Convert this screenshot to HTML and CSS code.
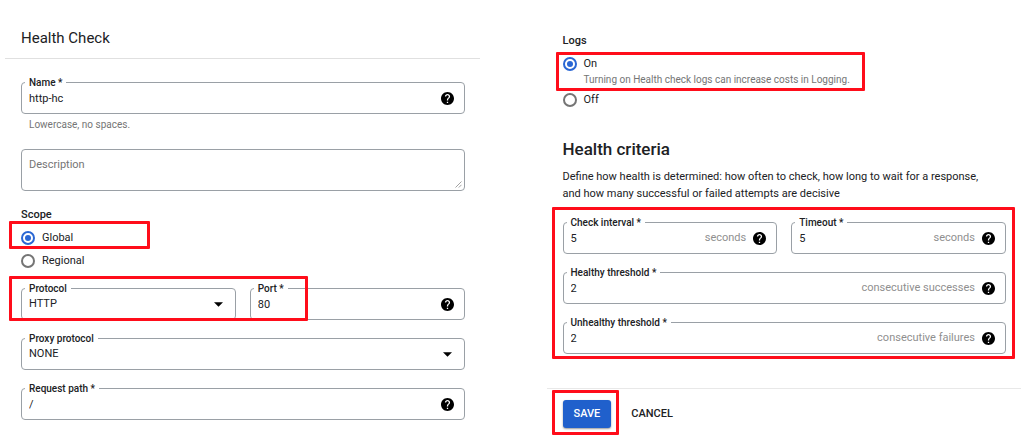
FILE: index.html
```html
<!DOCTYPE html>
<html lang="en">
<head>
<meta charset="utf-8">
<meta name="viewport" content="width=device-width, initial-scale=1">
<title>Health Check</title>
<link rel="stylesheet" href="styles.css">
</head>
<body>
<svg class="sprite" aria-hidden="true">
  <symbol id="help" viewBox="2 2 20 20"><path d="M12 2C6.48 2 2 6.48 2 12s4.48 10 10 10 10-4.48 10-10S17.52 2 12 2zm1 17h-2v-2h2v2zm2.07-7.75l-.9.92C13.45 12.9 13 13.5 13 15h-2v-.5c0-1.1.45-2.1 1.17-2.83l1.24-1.26c.37-.36.59-.86.59-1.41 0-1.1-.9-2-2-2s-2 .9-2 2H8c0-2.21 1.79-4 4-4s4 1.79 4 4c0 .88-.36 1.68-.93 2.25z"/></symbol>
  <symbol id="caret" viewBox="0 0 10 5"><path d="M0 0h10L5 5z"/></symbol>
</svg>
<form class="page">
  <section class="panel">
    <h1 class="panel-title">Health Check</h1>
    <div class="content content-basic">
      <div>
        <div class="field">
          <label class="field-label" for="name">Name *</label>
          <input class="field-input" id="name" type="text" value="http-hc">
          <button class="help" type="button" aria-label="Help for name"><svg><use href="#help"/></svg></button>
        </div>
        <p class="hint field-hint">Lowercase, no spaces.</p>
      </div>
      <div class="field field-area">
        <textarea class="area" aria-label="Description" placeholder="Description"></textarea>
        <svg class="grip" viewBox="0 0 7 7" aria-hidden="true"><path d="M0.5 6.5l6-6M3.8 6.5l2.7-2.7"/></svg>
      </div>
      <fieldset class="choices">
        <legend class="group-title">Scope</legend>
        <div class="option mark mark-scope">
          <input class="radio" type="radio" name="scope" id="global" checked>
          <label for="global">Global</label>
        </div>
        <div class="option">
          <input class="radio" type="radio" name="scope" id="regional">
          <label for="regional">Regional</label>
        </div>
      </fieldset>
      <div class="fields">
        <div class="pair mark mark-protocol">
          <div class="field">
            <label class="field-label" for="protocol">Protocol</label>
            <select class="field-input" id="protocol"><option>HTTP</option></select>
            <svg class="caret" aria-hidden="true"><use href="#caret"/></svg>
          </div>
          <div class="field">
            <label class="field-label" for="port">Port *</label>
            <input class="field-input" id="port" type="text" value="80">
            <button class="help" type="button" aria-label="Help for port"><svg><use href="#help"/></svg></button>
          </div>
        </div>
        <div class="field">
          <label class="field-label" for="proxy">Proxy protocol</label>
          <select class="field-input" id="proxy"><option>NONE</option></select>
          <svg class="caret" aria-hidden="true"><use href="#caret"/></svg>
        </div>
        <div class="field">
          <label class="field-label" for="path">Request path *</label>
          <input class="field-input" id="path" type="text" value="/">
          <button class="help" type="button" aria-label="Help for request path"><svg><use href="#help"/></svg></button>
        </div>
      </div>
    </div>
  </section>

  <section class="panel">
    <div class="content content-criteria">
      <fieldset class="choices">
        <legend class="group-title">Logs</legend>
        <div class="option option-described mark mark-logs">
          <input class="radio" type="radio" name="logs" id="on" aria-describedby="on-hint" checked>
          <div>
            <label for="on">On</label>
            <p class="hint" id="on-hint">Turning on Health check logs can increase costs in Logging.</p>
          </div>
        </div>
        <div class="option">
          <input class="radio" type="radio" name="logs" id="off">
          <label for="off">Off</label>
        </div>
      </fieldset>
      <h2 class="section-title">Health criteria</h2>
      <p class="description">Define how health is determined: how often to check, how long to wait for a response, and how many successful or failed attempts are decisive</p>
      <div class="fields mark mark-criteria">
        <div class="pair">
          <div class="field">
            <label class="field-label" for="interval">Check interval *</label>
            <input class="field-input" id="interval" type="text" value="5">
            <span class="suffix">seconds</span>
            <button class="help" type="button" aria-label="Help for check interval"><svg><use href="#help"/></svg></button>
          </div>
          <div class="field">
            <label class="field-label" for="timeout">Timeout *</label>
            <input class="field-input" id="timeout" type="text" value="5">
            <span class="suffix">seconds</span>
            <button class="help" type="button" aria-label="Help for timeout"><svg><use href="#help"/></svg></button>
          </div>
        </div>
        <div class="field">
          <label class="field-label" for="healthy">Healthy threshold *</label>
          <input class="field-input" id="healthy" type="text" value="2">
          <span class="suffix">consecutive successes</span>
          <button class="help" type="button" aria-label="Help for healthy threshold"><svg><use href="#help"/></svg></button>
        </div>
        <div class="field">
          <label class="field-label" for="unhealthy">Unhealthy threshold *</label>
          <input class="field-input" id="unhealthy" type="text" value="2">
          <span class="suffix">consecutive failures</span>
          <button class="help" type="button" aria-label="Help for unhealthy threshold"><svg><use href="#help"/></svg></button>
        </div>
      </div>
    </div>
    <div class="actions">
      <div class="mark mark-save"><button class="button button-primary" type="submit">SAVE</button></div>
      <button class="button" type="button">CANCEL</button>
    </div>
  </section>
</form>
</body>
</html>
```

FILE: styles.css
```css
*, *::before, *::after { box-sizing: border-box; }

body {
  margin: 0;
  background: #fff;
  color: #202124;
  font: 11px/16px Roboto, "Liberation Sans", sans-serif;
}

h1, h2, p { margin: 0; }
button, input, select, textarea { font: inherit; color: inherit; }
.sprite { position: absolute; width: 0; height: 0; }

.page {
  display: grid;
  grid-template-columns: 1fr 1fr;
  column-gap: 67px;
  padding: 0 3px 0 5px;
}

.panel { min-width: 0; }

.panel-title {
  padding: 25px 16px 7px;
  border-bottom: 1px solid #e0e0e0;
  font-size: 15px;
  font-weight: 400;
  line-height: 26px;
}

.content { padding: 0 15px 0 16px; }
.content-basic { display: grid; row-gap: 16px; padding-top: 23px; }
.content-criteria { padding-top: 33px; }

/* Outlined fields */
.fields { display: grid; row-gap: 18px; }
.pair { display: grid; grid-template-columns: 1fr 1fr; column-gap: 14px; }

.field {
  position: relative;
  display: flex;
  align-items: center;
  min-width: 0;
  height: 32px;
  padding: 0 10px 0 7px;
  border: 1px solid #9aa0a6;
  border-radius: 4px;
}

.field-label {
  position: absolute;
  top: -8px;
  left: 3px;
  padding: 0 4px;
  background: #fff;
  font-size: 10px;
  font-weight: 500;
}

.field-input {
  flex: 1;
  min-width: 0;
  height: 100%;
  padding: 0;
  border: 0;
  outline: 0;
  background: none;
  appearance: none;
}

.suffix { color: #8f8f8f; }

.help {
  display: flex;
  margin-left: 7px;
  padding: 0;
  border: 0;
  background: none;
}

.help svg { width: 13px; height: 13px; fill: #000; }
.caret { width: 9px; height: 5px; margin-right: 2px; fill: #000; pointer-events: none; }

.hint { color: #757575; font-size: 10px; }
.field-hint { margin-top: 3px; padding-left: 8px; }

.field-area { height: 42px; padding-right: 1px; }
.area {
  flex: 1;
  height: 100%;
  padding: 7px 0;
  border: 0;
  outline: 0;
  resize: none;
  background: none;
}
.area::placeholder { color: #757575; }
.grip {
  position: absolute;
  right: 2px;
  bottom: 2px;
  width: 7px;
  height: 7px;
  fill: none;
  stroke: #8a8a8a;
  stroke-width: 0.8;
}

/* Radio groups */
.choices { margin: 0; padding: 0; border: 0; }
.group-title { margin-bottom: 3px; padding: 0; font-weight: 500; }
.option { display: flex; column-gap: 7px; padding: 4px 0 3px; }
.option-described { padding-bottom: 0; }

.radio {
  flex: none;
  width: 14px;
  height: 14px;
  margin: 1px 0 0;
  border: 2px solid #757575;
  border-radius: 50%;
  background: #fff;
  appearance: none;
}
.radio:checked {
  padding: 2px;
  border-color: #2a67d4;
  background: #2a67d4 content-box;
}

.section-title { margin-top: 26px; font-size: 17px; font-weight: 500; line-height: 24px; }
.description { max-width: 430px; margin: 7px 0 20px; line-height: 17px; }

/* Form actions */
.actions {
  display: flex;
  align-items: center;
  column-gap: 9px;
  margin-top: 34px;
  padding: 11px 16px;
  border-top: 1px solid #e8e8e8;
}

.button {
  height: 28px;
  padding: 0 11px;
  border: 0;
  border-radius: 3px;
  background: none;
  font-weight: 500;
}
.button-primary {
  background: #2060cc;
  box-shadow: 0 1px 2px #0006;
  color: #fff;
}

/* Red callout frames */
.mark { position: relative; }
.mark::after {
  content: "";
  position: absolute;
  border: 3px solid #ff0d1a;
  border-radius: 1px;
  pointer-events: none;
}
.mark-scope::after { top: -5px; left: -12px; width: 141px; height: 28px; }
.mark-protocol::after { inset: -12px 157px -1px -12px; }
.mark-logs::after { inset: 0 141px -3px -7px; }
.mark-criteria::after { inset: -15px -9px -5px -11px; }
.mark-save::after { inset: -10px -8px -7px -11px; }
```
